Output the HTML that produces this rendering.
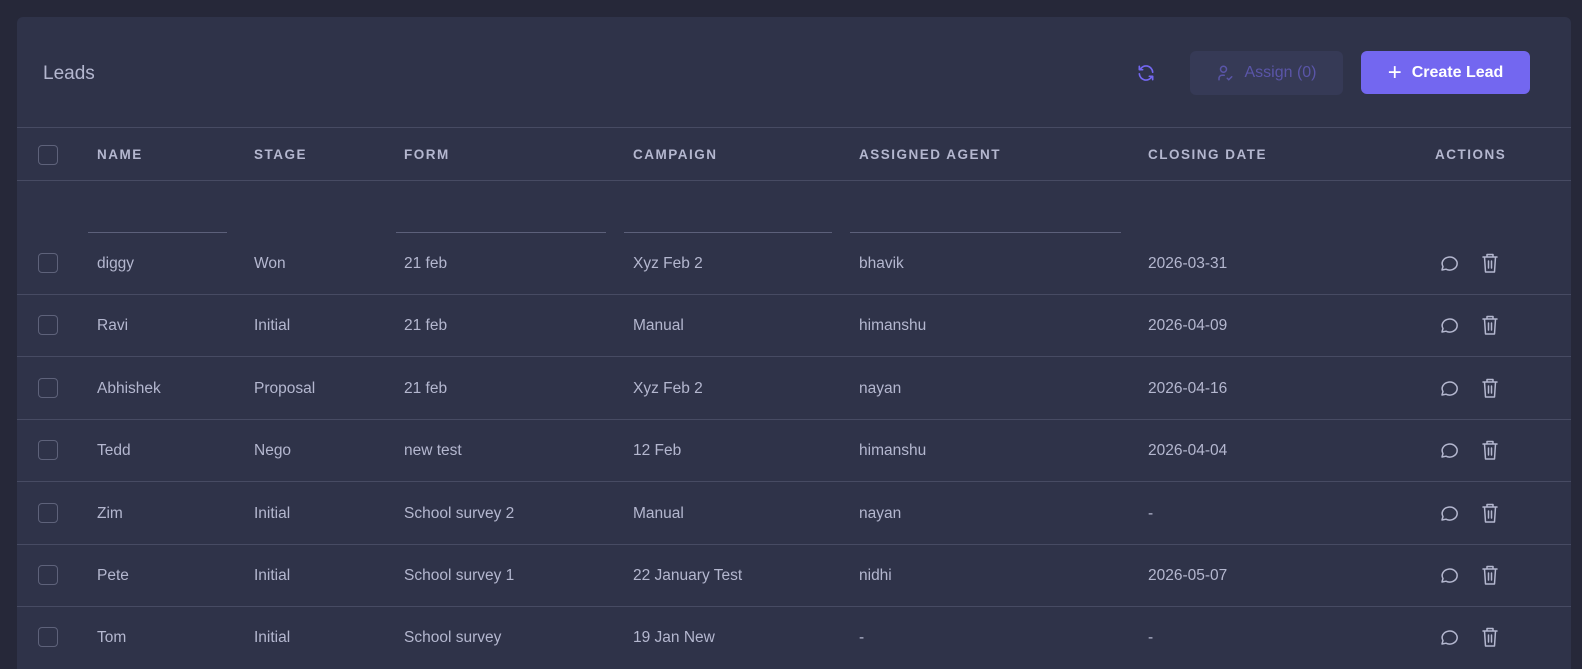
<!DOCTYPE html>
<html style="overflow:hidden;height:669px"><head><meta charset="utf-8"><style>
*{box-sizing:border-box;margin:0;padding:0}
body{width:1582px;height:669px;overflow:hidden;background:#262839;font-family:"Liberation Sans",sans-serif;color:#b4b7cf;position:relative}
.card{position:absolute;left:17px;top:17px;width:1554px;height:652px;background:#2f3349;border-radius:6px 6px 0 0;overflow:hidden}
.title{position:absolute;left:26px;top:46px;font-size:19px;color:#b4b7cf}
.abs{position:absolute}
.hline{position:absolute;left:0;width:1554px;height:1px;background:#474b63}
.cb{position:absolute;left:21px;width:20px;height:20px;border:1.5px solid #5e627a;border-radius:4px}
.th{position:absolute;top:130px;font-size:13.5px;font-weight:bold;letter-spacing:1.5px;color:#b4b7cf}
.td{position:absolute;font-size:15.5px;color:#b4b7cf}
.fl{position:absolute;top:215px;height:1px;background:#5c607a}
.btn{position:absolute;border-radius:6px;font-size:16px;display:flex;align-items:center;justify-content:center;gap:10px}
</style></head><body>
<div class="card">
<div class="title">Leads</div>
<svg class="abs" style="left:1119px;top:46px" width="20" height="20" viewBox="0 0 24 24" fill="none" stroke="#7367f0" stroke-width="2" stroke-linecap="round" stroke-linejoin="round"><path d="M20 11a8 8 0 0 0-14.9-3.5M4 4v4h4"/><path d="M4 13a8 8 0 0 0 14.9 3.5M20 20v-4h-4"/></svg>
<div class="btn" style="left:1173px;top:34px;width:153px;height:44px;background:#363a56;color:#5a55a8">
<svg width="18" height="18" viewBox="0 0 24 24" fill="none" stroke="#5a55a8" stroke-width="2" stroke-linecap="round"><circle cx="10" cy="7" r="4"/><path d="M4 21v-2a4 4 0 0 1 4-4h3M15 19l2 2 4-4"/></svg>Assign (0)</div>
<div class="btn" style="left:1344px;top:34px;width:169px;height:43px;background:#7367f0;color:#fff;font-weight:bold">
<span style="font-weight:normal;font-size:24px;line-height:1">+</span>Create Lead</div>
<div class="hline" style="top:110px"></div>
<div class="cb" style="top:128px"></div>
<div class="th" style="left:80px">NAME</div>
<div class="th" style="left:237px">STAGE</div>
<div class="th" style="left:387px">FORM</div>
<div class="th" style="left:616px">CAMPAIGN</div>
<div class="th" style="left:842px">ASSIGNED AGENT</div>
<div class="th" style="left:1131px">CLOSING DATE</div>
<div class="th" style="left:1418px">ACTIONS</div>
<div class="hline" style="top:163px"></div>
<div class="fl" style="left:71px;width:139px"></div>
<div class="fl" style="left:379px;width:210px"></div>
<div class="fl" style="left:607px;width:208px"></div>
<div class="fl" style="left:833px;width:271px"></div>
<div id="rows"></div>
</div>
<script>
var d=[["diggy","Won","21 feb","Xyz Feb 2","bhavik","2026-03-31"],["Ravi","Initial","21 feb","Manual","himanshu","2026-04-09"],["Abhishek","Proposal","21 feb","Xyz Feb 2","nayan","2026-04-16"],["Tedd","Nego","new test","12 Feb","himanshu","2026-04-04"],["Zim","Initial","School survey 2","Manual","nayan","-"],["Pete","Initial","School survey 1","22 January Test","nidhi","2026-05-07"],["Tom","Initial","School survey","19 Jan New","-","-"]];
var xs=[80,237,387,616,842,1131],h="";
d.forEach(function(r,i){var c=246+i*62.4;
h+='<div class="cb" style="top:'+(c-10)+'px"></div>';
r.forEach(function(t,j){h+='<div class="td" style="left:'+xs[j]+'px;top:'+(c-8)+'px">'+t+'</div>'});
h+='<svg class="abs" style="left:1421px;top:'+(c-10)+'px" width="22" height="20" viewBox="0 0 22 20" fill="none" stroke="#b4b7cf" stroke-width="1.5" stroke-linejoin="round"><path d="M4 17l1-3.5A7.5 6.5 0 1 1 8 16.2Z"/></svg>';
h+='<svg class="abs" style="left:1463px;top:'+(c-11)+'px" width="20" height="22" viewBox="0 0 20 22" fill="none" stroke="#b4b7cf" stroke-width="1.5" stroke-linecap="round" stroke-linejoin="round"><path d="M3 5h14M7 5V2.5h6V5M4.5 5l1 15h9l1-15M8.5 9v7M11.5 9v7"/></svg>';
if(i<6)h+='<div class="hline" style="top:'+Math.round(c+31)+'px"></div>';});
document.getElementById('rows').innerHTML=h;
</script>
</body></html>
